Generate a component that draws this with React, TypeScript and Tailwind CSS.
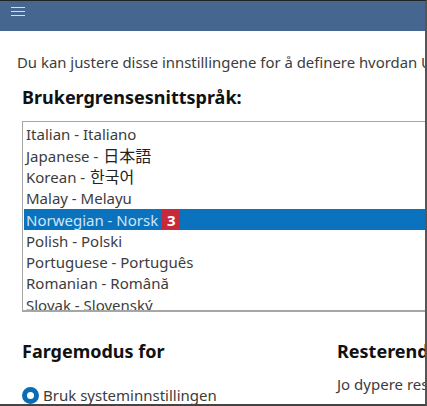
const LANGUAGES = [
  { name: 'Italian - Italiano' },
  { name: 'Japanese - ', native: '日本語' },
  { name: 'Korean - ', native: '한국어' },
  { name: 'Malay - Melayu' },
  { name: 'Norwegian - Norsk', selected: true },
  { name: 'Polish - Polski' },
  { name: 'Portuguese - Português' },
  { name: 'Romanian - Română' },
  { name: 'Slovak - Slovenský' },
];

export default function App() {
  return (
    <div className="h-[406px] w-[427px] overflow-hidden border-t border-t-[#222] border-r-2 border-r-[#555] border-b-2 border-b-[#444] bg-white font-['Noto_Sans','Noto_Sans_CJK_JP',sans-serif] text-[#3c3c3c]">
      {/* Top bar */}
      <div className="flex h-[30px] items-center bg-[#44668f] pl-[11px]">
        <svg width="14" height="9" viewBox="0 0 14 9" className="mb-[9px]" stroke="#d5dde8" strokeWidth="1">
          <path d="M0 .5h14M0 4.5h14M0 8.5h14" />
        </svg>
      </div>

      <div className="pt-[21px]">
        <p className="whitespace-nowrap pl-[17px] text-[14.9px] leading-5">
          Du kan justere disse innstillingene for å definere hvordan Ulysses ser ut
        </p>

        <div className="pl-[22px]">
          <h2 className="mt-[13px] whitespace-nowrap text-[18px] font-bold leading-6 text-[#111]">
            Brukergrensesnittspråk:
          </h2>

          {/* Language list */}
          <div className="mt-[12px] h-[191px] w-[420px] overflow-hidden border-2 border-[#a6a6a6] border-t-[1px] border-l-[1px] pl-[1px] pt-[2px]">
            {LANGUAGES.map((lang) => (
              <div
                key={lang.name}
                className={`flex h-[21.3px] items-center whitespace-pre pl-[2px] text-[15px] ${lang.selected ? 'bg-[#0b72bd] text-[#cfe6f7]' : ''}`}
              >
                {lang.name}
                {lang.native && <span className="ml-[1px] text-[16px] text-[#222]">{lang.native}</span>}
                {lang.selected && (
                  <span className="ml-[4px] flex h-[19px] w-[18px] items-center justify-center bg-[#c8283c] text-[15px] font-bold text-white">
                    3
                  </span>
                )}
              </div>
            ))}
          </div>

          {/* Two columns, the right one runs out of the window */}
          <div className="mt-[27px] flex whitespace-nowrap">
            <div className="w-[315px] shrink-0">
              <h3 className="text-[18px] font-bold leading-6 text-[#111]">Fargemodus for</h3>
              <label className="mt-[22px] flex items-center gap-[4px] text-[15px] leading-5">
                <span className="h-[17px] w-[17px] rounded-full border-[5px] border-[#0b6cb5] bg-white" />
                Bruk systeminnstillingen
              </label>
            </div>
            <div>
              <h3 className="text-[18px] font-bold leading-6 text-[#111]">Resterende</h3>
              <p className="mt-[11px] text-[15px] leading-5">Jo dypere resten</p>
            </div>
          </div>
        </div>
      </div>
    </div>
  );
}
